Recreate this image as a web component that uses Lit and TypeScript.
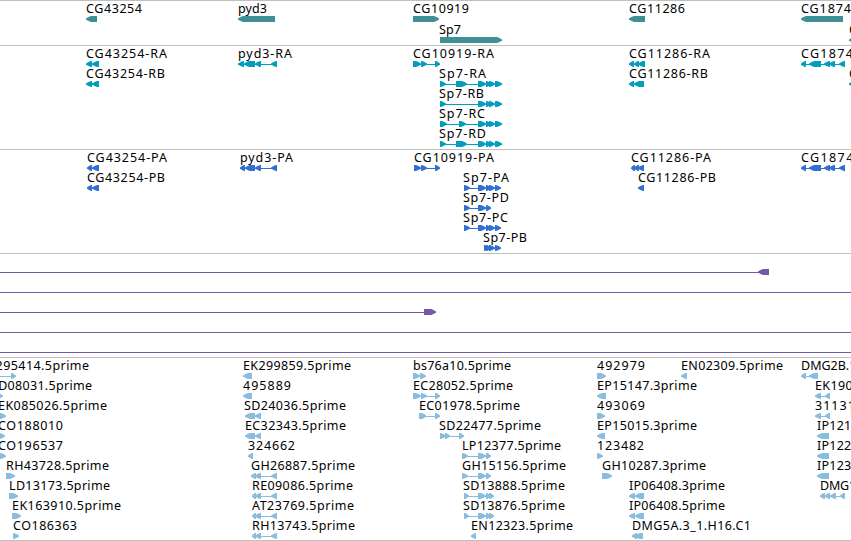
import { css, html, svg, LitElement } from 'lit';
import { customElement, property } from 'lit/decorators.js';

type Exon = [number, number];

interface Feature {
  label?: string;
  // left edge and drawn width of the label
  x?: number;
  w?: number;
  row: number;
  dir: 'l' | 'r';
  exons: Exon[];
  // intron line, when it reaches past the exons
  line?: Exon;
}

interface Track {
  name: string;
  height: number;
  color: string;
  pitch: number;
  features: Feature[];
}

const f = (
  row: number,
  label: string,
  x: number,
  end: number,
  dir: 'l' | 'r',
  exons: Exon[],
  line?: Exon
): Feature => ({ row, label, x, w: end - x, dir, exons, line });

const tracks: Track[] = [
  {
    name: 'gene',
    height: 45,
    color: '#3f8f96',
    pitch: 21,
    features: [
      f(0, 'CG43254', 86, 142, 'l', [[86, 97]]),
      f(0, 'pyd3', 238, 267, 'l', [[238, 275]]),
      f(0, 'CG10919', 413, 469, 'r', [[413, 439]]),
      f(0, 'CG11286', 629, 685, 'l', [[629, 645]]),
      f(0, 'CG18748', 801, 859, 'l', [[801, 843]]),
      f(1, 'Sp7', 439, 461, 'r', [[440, 502]]),
      f(1, 'CG18749', 849, 905, 'l', [[849, 890]]),
    ],
  },
  {
    name: 'transcript',
    height: 104,
    color: '#049dbd',
    pitch: 20,
    features: [
      f(0, 'CG43254-RA', 86, 167, 'l', [[86, 92], [92, 99]]),
      f(0, 'pyd3-RA', 238, 292, 'l', [[238, 244], [244, 255], [255, 261], [271, 277]]),
      f(0, 'CG10919-RA', 413, 494, 'r', [[413, 421], [421, 427], [435, 440]]),
      f(0, 'CG11286-RA', 629, 710, 'l', [[629, 634], [634, 639], [638, 645]]),
      f(0, 'CG18748-RA', 801, 885, 'l', [[801, 806], [809, 821], [824, 830], [829, 835], [839, 845]]),
      f(1, 'CG43254-RB', 86, 165, 'l', [[86, 92], [92, 99]]),
      f(1, 'Sp7-RA', 439, 486, 'r', [[440, 446], [456, 467], [478, 486], [486, 491], [489, 495], [495, 502]]),
      f(1, 'CG11286-RB', 629, 708, 'l', [[629, 634], [634, 644]]),
      f(1, 'CG18749-RA', 849, 930, 'l', [[849, 890]]),
      f(2, 'Sp7-RB', 439, 484, 'r', [[440, 446], [478, 486], [486, 491], [489, 495], [495, 502]]),
      f(3, 'Sp7-RC', 439, 485, 'r', [[440, 447], [459, 466], [478, 486], [486, 491], [489, 495], [495, 502]]),
      f(4, 'Sp7-RD', 439, 486, 'r', [[440, 446], [456, 467], [478, 486], [486, 491], [489, 495], [495, 502]]),
    ],
  },
  {
    name: 'cds',
    height: 104,
    color: '#326fd1',
    pitch: 20,
    features: [
      f(0, 'CG43254-PA', 87, 167, 'l', [[87, 92], [92, 99]]),
      f(0, 'pyd3-PA', 240, 293, 'l', [[240, 245], [245, 255], [255, 261], [271, 277]]),
      f(0, 'CG10919-PA', 414, 494, 'r', [[414, 421], [421, 427], [435, 440]]),
      f(0, 'CG11286-PA', 631, 711, 'l', [[631, 635], [634, 639], [638, 644]]),
      f(0, 'CG18748-PA', 801, 885, 'l', [[801, 806], [809, 821], [824, 830], [829, 835], [839, 845]]),
      f(1, 'CG43254-PB', 87, 165, 'l', [[87, 92], [92, 99]]),
      f(1, 'Sp7-PA', 463, 509, 'r', [[464, 470], [478, 486], [486, 491], [489, 495], [495, 501]]),
      f(1, 'CG11286-PB', 638, 716, 'l', [[638, 644]]),
      f(2, 'Sp7-PD', 463, 509, 'r', [[464, 470], [478, 486], [486, 491]]),
      f(3, 'Sp7-PC', 463, 508, 'r', [[464, 470], [478, 486], [486, 491], [489, 495], [495, 501]]),
      f(4, 'Sp7-PB', 483, 527, 'r', [[484, 488], [486, 491], [489, 495], [495, 501]]),
    ],
  },
  {
    name: 'insertion',
    height: 104,
    color: '#7558a6',
    pitch: 20,
    features: [
      { row: 0, dir: 'l', exons: [[758, 769]], line: [0, 769] },
      { row: 1, dir: 'l', exons: [], line: [0, 851] },
      { row: 2, dir: 'r', exons: [[424, 436]], line: [0, 436] },
      { row: 3, dir: 'r', exons: [], line: [0, 851] },
      { row: 4, dir: 'r', exons: [], line: [0, 851] },
    ],
  },
  {
    name: 'est',
    height: 183,
    color: '#89bddf',
    pitch: 20,
    features: [
      f(0, 'EK295414.5prime', -20, 89, 'r', [[11, 16]], [0, 16]),
      f(0, 'EK299859.5prime', 243, 351, 'l', [[243, 252]]),
      f(0, 'bs76a10.5prime', 413, 511, 'r', [[413, 420], [420, 426]]),
      f(0, '492979', 597, 645, 'r', [[597, 606]]),
      f(0, 'EN02309.5prime', 681, 783, 'l', [[681, 687]]),
      f(0, 'DMG2B.1_1', 801, 869, 'l', [[801, 806], [809, 818]]),
      f(1, 'SD08031.5prime', -9, 92, 'r', [[-6, 3]]),
      f(1, '495889', 243, 291, 'l', [[243, 252]]),
      f(1, 'EC28052.5prime', 413, 513, 'r', [[413, 421], [421, 427], [435, 440]]),
      f(1, 'EP15147.3prime', 597, 697, 'l', [[597, 606]]),
      f(1, 'EK190385.5prime', 815, 923, 'l', [[815, 821], [825, 830]]),
      f(2, 'EK085026.5prime', -2, 107, 'r', [[-3, 6]]),
      f(2, 'SD24036.5prime', 244, 346, 'l', [[245, 255], [255, 261]]),
      f(2, 'EC01978.5prime', 419, 520, 'r', [[419, 426], [421, 426], [435, 440]]),
      f(2, '493069', 597, 645, 'r', [[597, 605]]),
      f(2, '311312', 815, 863, 'l', [[815, 821], [825, 830]]),
      f(3, 'CO188010', -2, 63, 'r', [[-3, 5]]),
      f(3, 'EC32343.5prime', 245, 346, 'l', [[245, 255], [255, 261]]),
      f(3, 'SD22477.5prime', 439, 541, 'r', [[440, 446], [445, 450], [459, 464]]),
      f(3, 'EP15015.3prime', 597, 697, 'l', [[597, 605]]),
      f(3, 'IP12127.5prime', 817, 913, 'l', [[817, 829]]),
      f(4, 'CO196537', -2, 63, 'r', [[-3, 6]]),
      f(4, '324662', 248, 295, 'l', [[248, 253]]),
      f(4, 'LP12377.5prime', 462, 561, 'r', [[462, 468], [478, 486], [486, 491]]),
      f(4, '123482', 597, 644, 'r', [[597, 603]]),
      f(4, 'IP12227.5prime', 817, 913, 'l', [[817, 829]]),
      f(5, 'RH43728.5prime', 6, 109, 'r', [[6, 15]]),
      f(5, 'GH26887.5prime', 251, 355, 'l', [[251, 256], [255, 261], [271, 277]]),
      f(5, 'GH15156.5prime', 462, 566, 'r', [[462, 468], [478, 486], [486, 491]]),
      f(5, 'GH10287.3prime', 602, 706, 'r', [[602, 612]]),
      f(5, 'IP12327.5prime', 817, 913, 'l', [[817, 829]]),
      f(6, 'LD13173.5prime', 9, 110, 'r', [[9, 18]]),
      f(6, 'RE09086.5prime', 252, 353, 'l', [[252, 256], [255, 261], [271, 277]]),
      f(6, 'SD13888.5prime', 463, 565, 'r', [[464, 469], [478, 486], [486, 490], [489, 494]]),
      f(6, 'IP06408.3prime', 629, 725, 'l', [[629, 635], [635, 644]]),
      f(6, 'DMG1A.3_1', 820, 886, 'l', [[820, 825], [825, 830], [830, 836], [840, 845]]),
      f(7, 'EK163910.5prime', 12, 121, 'r', [[12, 21]]),
      f(7, 'AT23769.5prime', 252, 354, 'l', [[252, 256], [255, 261], [271, 277]]),
      f(7, 'SD13876.5prime', 463, 565, 'r', [[464, 469], [478, 486], [486, 490], [489, 494]]),
      f(7, 'IP06408.5prime', 629, 725, 'l', [[629, 635], [635, 644]]),
      f(8, 'CO186363', 13, 77, 'r', [[13, 19]]),
      f(8, 'RH13743.5prime', 252, 355, 'l', [[252, 256], [255, 261], [271, 277]]),
      f(8, 'EN12323.5prime', 471, 573, 'l', [[471, 476]]),
      f(8, 'DMG5A.3_1.H16.C1', 632, 751, 'l', [[632, 637], [635, 643]]),
    ],
  },
];

@customElement('genome-track')
export class GenomeTrack extends LitElement {
  @property({ attribute: false }) track!: Track;

  static styles = css`
    :host {
      display: block;
      box-sizing: border-box;
      border-top: 1px solid #bfbfbf;
      overflow: hidden;
    }
    svg {
      display: block;
    }
    text {
      font-family: 'Noto Sans', 'Open Sans', sans-serif;
      font-size: 12.5px;
      fill: #000;
    }
  `;

  // Block with a pointed head, bulging a little so that short ones stay solid
  arrow([a, b]: Exon, dir: 'l' | 'r', y: number) {
    const head = Math.min(5, b - a - 1);
    const [tip, back, s] = dir === 'l' ? [a, b, 1] : [b, a, -1];
    const neck = tip + s * head;
    const mid = tip + (s * head) / 2;
    const points = [
      [tip, y + 2.5],
      [mid, y + 1],
      [neck, y],
      [back, y],
      [back, y + 6],
      [neck, y + 6],
      [mid, y + 5],
      [tip, y + 3.5],
    ];
    return svg`<polygon points=${points.join(' ')} />`;
  }

  feature(item: Feature) {
    const top = item.row * this.track.pitch;
    const last = item.exons[item.exons.length - 1];
    const line = item.line ?? [item.exons[0][0], last[1]];
    return svg`
      ${item.label
        ? svg`<text x=${item.x!} y=${top + 12} textLength=${item.w!}>${item.label}</text>`
        : null}
      <rect x=${line[0]} y=${top + 18} width=${line[1] - line[0]} height="1" />
      ${item.exons.map((exon) => this.arrow(exon, item.dir, top + 15))}
    `;
  }

  render() {
    const { height, color, features } = this.track;
    return html`
      <svg width="851" height=${height - 1} fill=${color}>
        ${features.map((item) => this.feature(item))}
      </svg>
    `;
  }
}

@customElement('app-root')
export class AppRoot extends LitElement {
  static styles = css`
    :host {
      display: flex;
      flex-direction: column;
      box-sizing: border-box;
      width: 851px;
      height: 541px;
      overflow: hidden;
      background: #fff;
      border-bottom: 1px solid #bfbfbf;
    }
    genome-track {
      flex: none;
    }
  `;

  render() {
    return tracks.map(
      (track) => html`<genome-track .track=${track}></genome-track>`
    );
  }
}
